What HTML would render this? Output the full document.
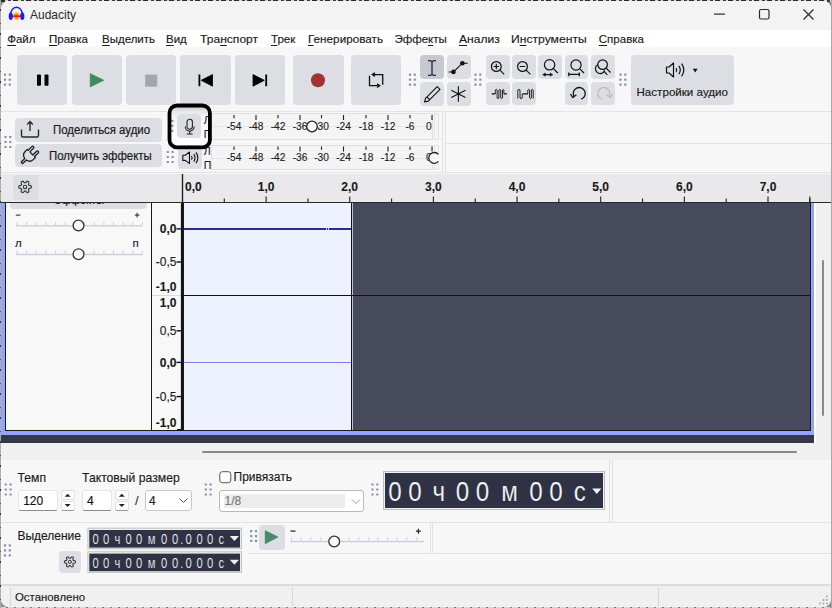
<!DOCTYPE html>
<html><head><meta charset="utf-8">
<style>
*{margin:0;padding:0;box-sizing:border-box}
html,body{width:832px;height:608px;overflow:hidden;background:#5a5a5a;font-family:"Liberation Sans",sans-serif;color:#1a1a1a}
.a{position:absolute}
.t{position:absolute;white-space:nowrap;line-height:1;-webkit-text-stroke:0.15px currentColor}
svg text{stroke:currentColor;stroke-width:0.12px}
.u{text-decoration:underline;text-underline-offset:2px;text-decoration-thickness:1px}
svg{position:absolute;left:0;top:0;overflow:visible}
</style></head><body>

<div class="a" style="left:0;top:0;width:832px;height:608px;background:#8a8a8a"></div>
<div class="a" style="left:0;top:0;width:832px;height:2px;background:repeating-linear-gradient(90deg,#2a2a2a 0 5px,#d8d8d8 5px 8px,#3a3a3a 8px 11px,#e0e0e0 11px 13px)"></div>
<div class="a" style="left:0;top:606.5px;width:832px;height:1.5px;background:repeating-linear-gradient(90deg,#dadada 0 6px,#777 6px 8px,#d4d4d4 8px 14px,#888 14px 16px)"></div>
<div class="a" style="left:0;top:0;width:1px;height:608px;background:repeating-linear-gradient(180deg,#a8a8a8 0 9px,#333 9px 11px,#b0b0b0 11px 23px,#555 23px 24px)"></div>
<div class="a" style="left:831px;top:0;width:1px;height:608px;background:#a8a8a8"></div>
<div id="win" class="a" style="left:1px;top:1px;width:830px;height:606px;background:#f7f7f7;border-radius:8px;overflow:hidden">
<div class="a" style="left:-1px;top:-1px;width:832px;height:608px">
<div class="a" style="left:0px;top:0px;width:832px;height:30px;background:#f3f3f3;"></div>
<svg width="832" height="30">
<defs><radialGradient id="g1" cx="50%" cy="50%" r="50%"><stop offset="0" stop-color="#ff2a00"/><stop offset="0.5" stop-color="#ff9a00"/><stop offset="1" stop-color="#ffe27a" stop-opacity="0.5"/></radialGradient></defs>
<ellipse cx="16.5" cy="16.1" rx="4.1" ry="4.6" fill="url(#g1)"/>
<rect x="12.6" y="15.4" width="7.8" height="1.6" fill="#ff1a00"/>
<path d="M10.4 15.5 A6.1 8.3 0 0 1 22.6 15.5" fill="none" stroke="#1a1aff" stroke-width="1.5"/>
<ellipse cx="10.8" cy="16.3" rx="2.1" ry="3.8" fill="#1a1aff"/>
<ellipse cx="22.3" cy="16.3" rx="2.1" ry="3.8" fill="#1a1aff"/>
<rect x="714" y="13.5" width="11" height="1.2" fill="#2a2a2a"/>
<rect x="759.5" y="9.5" width="9.5" height="9.5" rx="1.5" fill="none" stroke="#2a2a2a" stroke-width="1.2"/>
<path d="M803.5 9.5 L813.5 19.5 M813.5 9.5 L803.5 19.5" stroke="#2a2a2a" stroke-width="1.2"/>
</svg>
<div class="t" style="left:30px;top:9px;font-size:12px;color:#2a2a2a;font-weight:normal;-webkit-text-stroke:0">Audacity</div>
<div class="a" style="left:0px;top:30px;width:832px;height:17px;background:#ffffff;"></div>
<div class="t" style="left:7.2px;top:34px;font-size:11.5px;color:#1a1a1a;font-weight:normal;transform:scaleX(1.0);transform-origin:0 0"><span class="u">Ф</span>айл</div>
<div class="t" style="left:49px;top:34px;font-size:11.5px;color:#1a1a1a;font-weight:normal;transform:scaleX(1.0);transform-origin:0 0"><span class="u">П</span>равка</div>
<div class="t" style="left:102px;top:34px;font-size:11.5px;color:#1a1a1a;font-weight:normal;transform:scaleX(1.0);transform-origin:0 0"><span class="u">В</span>ыделить</div>
<div class="t" style="left:166px;top:34px;font-size:11.5px;color:#1a1a1a;font-weight:normal;transform:scaleX(1.0);transform-origin:0 0"><span class="u">В</span>ид</div>
<div class="t" style="left:200px;top:34px;font-size:11.5px;color:#1a1a1a;font-weight:normal;transform:scaleX(1.05);transform-origin:0 0">Тра<span class="u">н</span>спорт</div>
<div class="t" style="left:271px;top:34px;font-size:11.5px;color:#1a1a1a;font-weight:normal;transform:scaleX(1.0);transform-origin:0 0"><span class="u">Т</span>рек</div>
<div class="t" style="left:308px;top:34px;font-size:11.5px;color:#1a1a1a;font-weight:normal;transform:scaleX(1.02);transform-origin:0 0"><span class="u">Г</span>енерировать</div>
<div class="t" style="left:394.5px;top:34px;font-size:11.5px;color:#1a1a1a;font-weight:normal;transform:scaleX(1.0);transform-origin:0 0">Эффе<span class="u">к</span>ты</div>
<div class="t" style="left:459px;top:34px;font-size:11.5px;color:#1a1a1a;font-weight:normal;transform:scaleX(1.05);transform-origin:0 0"><span class="u">А</span>нализ</div>
<div class="t" style="left:511px;top:34px;font-size:11.5px;color:#1a1a1a;font-weight:normal;transform:scaleX(1.055);transform-origin:0 0">И<span class="u">н</span>струменты</div>
<div class="t" style="left:598.8px;top:34px;font-size:11.5px;color:#1a1a1a;font-weight:normal;transform:scaleX(1.0);transform-origin:0 0"><span class="u">С</span>правка</div>
<div class="a" style="left:0px;top:47px;width:832px;height:128px;background:#f7f7f8;"></div>
<div class="a" style="left:0px;top:111px;width:832px;height:1px;background:#e4e4e6;"></div>
<div class="a" style="left:0px;top:172px;width:832px;height:1px;background:#e4e4e6;"></div>
<div class="a" style="left:17px;top:55px;width:50px;height:50px;background:#dddee3;border-radius:4px"></div>
<div class="a" style="left:72px;top:55px;width:50px;height:50px;background:#dddee3;border-radius:4px"></div>
<div class="a" style="left:126px;top:55px;width:50px;height:50px;background:#dddee3;border-radius:4px"></div>
<div class="a" style="left:180px;top:55px;width:51px;height:50px;background:#dddee3;border-radius:4px"></div>
<div class="a" style="left:235px;top:55px;width:50px;height:50px;background:#dddee3;border-radius:4px"></div>
<div class="a" style="left:293px;top:55px;width:51px;height:50px;background:#dddee3;border-radius:4px"></div>
<div class="a" style="left:351px;top:55px;width:50px;height:50px;background:#dddee3;border-radius:4px"></div>
<svg width="832" height="175"><rect x="3.90" y="73.50" width="2.20" height="2.20" rx="0.50" fill="#8a8fa6"/><rect x="3.90" y="78.50" width="2.20" height="2.20" rx="0.50" fill="#8a8fa6"/><rect x="3.90" y="83.50" width="2.20" height="2.20" rx="0.50" fill="#8a8fa6"/><rect x="8.70" y="73.50" width="2.20" height="2.20" rx="0.50" fill="#8a8fa6"/><rect x="8.70" y="78.50" width="2.20" height="2.20" rx="0.50" fill="#8a8fa6"/><rect x="8.70" y="83.50" width="2.20" height="2.20" rx="0.50" fill="#8a8fa6"/>
<rect x="37" y="74.6" width="4" height="11.2" rx="1" fill="#000"/>
<rect x="44.5" y="74.6" width="4" height="11.2" rx="1" fill="#000"/>
<path d="M90.2 73.6 L103.9 80.3 L90.2 87 Z" fill="#3f8a5c" stroke="#3f8a5c" stroke-width="0.6" stroke-linejoin="round"/>
<rect x="145.2" y="74.6" width="12" height="12" fill="#a2a6b0"/>
<rect x="198.5" y="74.5" width="1.8" height="11.7" fill="#000"/>
<path d="M212.5 74.6 L201.2 80.3 L212.5 86.2 Z" fill="#000" stroke="#000" stroke-width="0.8" stroke-linejoin="round"/>
<path d="M253 74.6 L264.3 80.3 L253 86.2 Z" fill="#000" stroke="#000" stroke-width="0.8" stroke-linejoin="round"/>
<rect x="265.3" y="74.5" width="1.8" height="11.7" fill="#000"/>
<circle cx="318" cy="80.3" r="7" fill="#a33232"/>
<path d="M372.7 74.6 H382.7 V84.8 M369.5 75.8 V85.7 H379.3" fill="none" stroke="#111" stroke-width="1.3"/>
<path d="M375 72.8 L372.3 74.6 L375 76.4" fill="none" stroke="#111" stroke-width="1.3"/>
<path d="M377 83.9 L379.7 85.7 L377 87.5" fill="none" stroke="#111" stroke-width="1.3"/>
<rect x="408.90" y="73.50" width="2.20" height="2.20" rx="0.50" fill="#8a8fa6"/><rect x="408.90" y="78.50" width="2.20" height="2.20" rx="0.50" fill="#8a8fa6"/><rect x="408.90" y="83.50" width="2.20" height="2.20" rx="0.50" fill="#8a8fa6"/><rect x="413.70" y="73.50" width="2.20" height="2.20" rx="0.50" fill="#8a8fa6"/><rect x="413.70" y="78.50" width="2.20" height="2.20" rx="0.50" fill="#8a8fa6"/><rect x="413.70" y="83.50" width="2.20" height="2.20" rx="0.50" fill="#8a8fa6"/><rect x="474.40" y="73.50" width="2.20" height="2.20" rx="0.50" fill="#8a8fa6"/><rect x="474.40" y="78.50" width="2.20" height="2.20" rx="0.50" fill="#8a8fa6"/><rect x="474.40" y="83.50" width="2.20" height="2.20" rx="0.50" fill="#8a8fa6"/><rect x="479.20" y="73.50" width="2.20" height="2.20" rx="0.50" fill="#8a8fa6"/><rect x="479.20" y="78.50" width="2.20" height="2.20" rx="0.50" fill="#8a8fa6"/><rect x="479.20" y="83.50" width="2.20" height="2.20" rx="0.50" fill="#8a8fa6"/><rect x="619.40" y="73.50" width="2.20" height="2.20" rx="0.50" fill="#8a8fa6"/><rect x="619.40" y="78.50" width="2.20" height="2.20" rx="0.50" fill="#8a8fa6"/><rect x="619.40" y="83.50" width="2.20" height="2.20" rx="0.50" fill="#8a8fa6"/><rect x="624.20" y="73.50" width="2.20" height="2.20" rx="0.50" fill="#8a8fa6"/><rect x="624.20" y="78.50" width="2.20" height="2.20" rx="0.50" fill="#8a8fa6"/><rect x="624.20" y="83.50" width="2.20" height="2.20" rx="0.50" fill="#8a8fa6"/></svg>
<div class="a" style="left:420px;top:55px;width:24px;height:24px;background:#c6c8d4;border-radius:4px"></div>
<div class="a" style="left:446.5px;top:55px;width:24px;height:24px;background:#dddee3;border-radius:4px"></div>
<div class="a" style="left:420px;top:81.5px;width:24px;height:24px;background:#dddee3;border-radius:4px"></div>
<div class="a" style="left:446.5px;top:81.5px;width:24px;height:24px;background:#dddee3;border-radius:4px"></div>
<div class="a" style="left:486.2px;top:55.3px;width:23.6px;height:23.6px;background:#dddee3;border-radius:4px"></div>
<div class="a" style="left:512.3px;top:55.3px;width:23.6px;height:23.6px;background:#dddee3;border-radius:4px"></div>
<div class="a" style="left:538.3px;top:55.3px;width:23.6px;height:23.6px;background:#dddee3;border-radius:4px"></div>
<div class="a" style="left:564.6px;top:55.3px;width:23.6px;height:23.6px;background:#dddee3;border-radius:4px"></div>
<div class="a" style="left:591px;top:55.3px;width:23.6px;height:23.6px;background:#dddee3;border-radius:4px"></div>
<div class="a" style="left:486.2px;top:81.7px;width:23.6px;height:23.6px;background:#dddee3;border-radius:4px"></div>
<div class="a" style="left:512.3px;top:81.7px;width:23.6px;height:23.6px;background:#dddee3;border-radius:4px"></div>
<div class="a" style="left:564.6px;top:81.7px;width:23.6px;height:23.6px;background:#dddee3;border-radius:4px"></div>
<div class="a" style="left:591px;top:81.7px;width:23.6px;height:23.6px;background:#dddee3;border-radius:4px"></div>
<div class="a" style="left:630.5px;top:55.2px;width:103.5px;height:50.2px;background:#dddee3;border-radius:4px"></div>
<svg width="832" height="175">
<path d="M428 60.8 Q432 60 432 62.5 V73.5 Q432 76 428 75.2 M436 60.8 Q432 60 432 62.5 V73.5 Q432 76 436 75.2" fill="none" stroke="#333" stroke-width="1.4"/>
<path d="M448.6 72 H453.5 L462.4 63.2 H467.7" fill="none" stroke="#111" stroke-width="1.1"/>
<circle cx="453.5" cy="71.9" r="2.3" fill="#111"/><circle cx="462.4" cy="63.2" r="2.3" fill="#111"/>
<path d="M437.2 86.6 L440 89.4 L428.3 101.1 L424.6 102 L425.5 98.3 Z M427 97 L429.9 99.8" fill="none" stroke="#111" stroke-width="1.1" stroke-linejoin="round"/>
<path d="M458.4 86.3 V101.7 M451.3 90.3 L465.5 97.6 M451.3 97.6 L465.5 90.3" stroke="#111" stroke-width="1.1"/>
<circle cx="458.4" cy="93.9" r="1.3" fill="#111"/>
<circle cx="496.3" cy="66.5" r="4.9" fill="none" stroke="#111" stroke-width="1.2"/><path d="M500 70.2 L504.2 74.4 M493.6 66.5 H499 M496.3 63.8 V69.2" stroke="#111" stroke-width="1.2"/>
<circle cx="522.5" cy="66.5" r="4.9" fill="none" stroke="#111" stroke-width="1.2"/><path d="M526.2 70.2 L530.4 74.4 M519.8 66.5 H525.2" stroke="#111" stroke-width="1.2"/>
<circle cx="549.6" cy="64.8" r="5.2" fill="none" stroke="#111" stroke-width="1.2"/><path d="M553.4 68.6 L557.8 73" stroke="#111" stroke-width="1.2"/>
<path d="M542.8 74.6 H552.6" stroke="#111" stroke-width="1.1"/><path d="M545.5 72.4 L542.6 74.6 L545.5 76.8 Z M549.9 72.4 L552.8 74.6 L549.9 76.8 Z" fill="#111"/>
<circle cx="576" cy="65" r="5.1" fill="none" stroke="#111" stroke-width="1.2"/><path d="M579.8 68.8 L584 73" stroke="#111" stroke-width="1.2"/>
<path d="M568.8 74.3 H579.3 M568.8 72.4 V76.2 M579.3 72.4 V76.2" stroke="#111" stroke-width="1.3"/>
<circle cx="602.6" cy="64.6" r="4.8" fill="none" stroke="#111" stroke-width="1.2"/>
<path d="M597.8 64.6 A4.8 4.8 0 1 0 604.7 70.5" fill="none" stroke="#111" stroke-width="1.2"/>
<path d="M606.2 68.2 L610.5 72.5 M603.5 70.9 L607.4 74.8" stroke="#111" stroke-width="1.2"/>
<path d="M491.7 93.9 H495.3 M503.9 93.9 H506.9" stroke="#111" stroke-width="1.1"/>
<path d="M495.3 93.9 V90 Q496.2 88.6 497.1 90 V98 Q498 99.4 498.9 98 V90 Q499.8 88.6 500.7 90 V98 Q501.6 99.4 502.5 98 V90 Q503.2 88.8 503.9 90 V93.9" fill="none" stroke="#111" stroke-width="0.9"/>
<path d="M522.5 93.9 H528" stroke="#111" stroke-width="1.1"/>
<path d="M517.8 98.5 V90 Q518.9 88.6 520 90 V98 Q521.1 99.4 522.2 98 V93.9" fill="none" stroke="#111" stroke-width="0.9"/>
<path d="M527.8 93.9 V90 Q528.7 88.6 529.6 90 V98 Q530.5 99.4 531.4 98 V90 Q532.3 88.6 533.2 90 V98.5" fill="none" stroke="#111" stroke-width="0.9"/>
<path d="M574 96.5 A6 6 0 1 1 581.2 99.2" fill="none" stroke="#111" stroke-width="1.3"/>
<path d="M570.4 94 L572.8 97.6 L576.4 94.8" fill="none" stroke="#111" stroke-width="1.3" stroke-linejoin="miter"/>
<path d="M609 96.5 A6 6 0 1 0 601.8 99.2" fill="none" stroke="#b4b9c3" stroke-width="1.2"/>
<path d="M612.6 94 L610.2 97.6 L606.6 94.8" fill="none" stroke="#b4b9c3" stroke-width="1.2"/>
<path d="M666.5 67 H669 L673.5 63 V77 L669 73 H666.5 Z" fill="none" stroke="#111" stroke-width="1.2" stroke-linejoin="round"/>
<path d="M676 68 Q677.5 70 676 72 M678.8 65.8 Q681.8 70 678.8 74.2 M681.6 63.6 Q686 70 681.6 76.4" fill="none" stroke="#111" stroke-width="1.2"/>
<path d="M692.8 68.8 H697.6 L695.2 72.6 Z" fill="#111"/>
</svg>
<div class="t" style="left:636.5px;top:85.9px;font-size:11.6px;color:#1a1a1a;font-weight:normal;">Настройки аудио</div>
<div class="a" style="left:15px;top:117.5px;width:146.5px;height:24px;background:#dddee3;border-radius:4px"></div>
<div class="a" style="left:15px;top:143.8px;width:146.5px;height:23.5px;background:#dddee3;border-radius:4px"></div>
<svg width="832" height="175"><rect x="4.40" y="135.90" width="2.20" height="2.20" rx="0.50" fill="#8a8fa6"/><rect x="4.40" y="140.90" width="2.20" height="2.20" rx="0.50" fill="#8a8fa6"/><rect x="4.40" y="145.90" width="2.20" height="2.20" rx="0.50" fill="#8a8fa6"/><rect x="9.20" y="135.90" width="2.20" height="2.20" rx="0.50" fill="#8a8fa6"/><rect x="9.20" y="140.90" width="2.20" height="2.20" rx="0.50" fill="#8a8fa6"/><rect x="9.20" y="145.90" width="2.20" height="2.20" rx="0.50" fill="#8a8fa6"/>
<path d="M21.5 129.5 V135.5 Q21.5 137 23 137 H37 Q38.5 137 38.5 135.5 V129.5" fill="none" stroke="#2a2a2a" stroke-width="1.4"/>
<path d="M30 131 V122 M27.2 124.6 L30 121.6 L32.8 124.6" fill="none" stroke="#2a2a2a" stroke-width="1.4"/>
<path transform="translate(29.2,155.6) rotate(45) scale(0.86)" d="M-1.3 11 L-1.3 6 C-4.5 5.5 -6.6 3 -6.6 0 L-6.6 -3.6 L-5.2 -3.6 L-5.2 -9.6 A1.35 1.35 0 0 1 -2.5 -9.6 L-2.5 -3.6 L2.5 -3.6 L2.5 -9.6 A1.35 1.35 0 0 1 5.2 -9.6 L5.2 -3.6 L6.6 -3.6 L6.6 0 C6.6 3 4.5 5.5 1.3 6 L1.3 11 A1.3 1.3 0 0 1 -1.3 11 Z" fill="none" stroke="#222" stroke-width="1.55" stroke-linejoin="round"/>
</svg>
<div class="t" style="left:52.5px;top:123.6px;font-size:12px;color:#1a1a1a;font-weight:normal;transform:scaleX(0.95);transform-origin:0 0;-webkit-text-stroke:0.2px #1a1a1a">Поделиться аудио</div>
<div class="t" style="left:49px;top:149.8px;font-size:12px;color:#1a1a1a;font-weight:normal;transform:scaleX(0.95);transform-origin:0 0;-webkit-text-stroke:0.2px #1a1a1a">Получить эффекты</div>
<div class="a" style="left:171px;top:107px;width:37.5px;height:39px;border-radius:5px;background:linear-gradient(180deg,#c9c9c9 0px,#e6e6e6 4px,#f3f3f3 9px,#fbfbfb 60%,#ffffff 100%)"></div>
<div class="a" style="left:176.8px;top:114px;width:24.6px;height:24.1px;background:#dddee3;border-radius:4px"></div>
<div class="a" style="left:177.5px;top:144.5px;width:24px;height:24.5px;background:#dddee3;border-radius:4px"></div>
<div class="a" style="left:211px;top:113px;width:222px;height:26.5px;background:#f4f4f5;border:1px solid #dedee2"></div>
<div class="a" style="left:211px;top:144.8px;width:222px;height:25.6px;background:#f4f4f5;border:1px solid #dedee2"></div>
<div class="a" style="left:212px;top:126px;width:220px;height:1px;background:#e6e6e8;"></div>
<div class="a" style="left:212px;top:157.5px;width:220px;height:1px;background:#e6e6e8;"></div>
<div class="a" style="left:433.5px;top:113px;width:5px;height:26.5px;background:#f4f4f5;border:1px solid #e2e2e5"></div>
<div class="a" style="left:433.5px;top:144.8px;width:5px;height:25.6px;background:#f4f4f5;border:1px solid #e2e2e5"></div>
<div class="a" style="left:442px;top:112px;width:1px;height:60px;background:#e2e2e5;"></div>
<div class="a" style="left:445px;top:112px;width:1px;height:60px;background:#e2e2e5;"></div>
<div class="a" style="left:446px;top:142.6px;width:386px;height:1.2px;background:#e4e4e7;"></div>
<svg width="832" height="175"><rect x="233.45" y="115" width="1.1" height="3.3" fill="#222"/><rect x="233.45" y="146.5" width="1.1" height="3.3" fill="#222"/><text x="234.0" y="129.5" font-size="10.2" text-anchor="middle" fill="#1a1a1a">-54</text><text x="234.0" y="160.6" font-size="10.2" text-anchor="middle" fill="#1a1a1a">-54</text><rect x="255.45" y="115" width="1.1" height="5" fill="#222"/><rect x="255.45" y="146.5" width="1.1" height="5" fill="#222"/><text x="256.0" y="129.5" font-size="10.2" text-anchor="middle" fill="#1a1a1a">-48</text><text x="256.0" y="160.6" font-size="10.2" text-anchor="middle" fill="#1a1a1a">-48</text><rect x="277.45" y="115" width="1.1" height="3.3" fill="#222"/><rect x="277.45" y="146.5" width="1.1" height="3.3" fill="#222"/><text x="278.0" y="129.5" font-size="10.2" text-anchor="middle" fill="#1a1a1a">-42</text><text x="278.0" y="160.6" font-size="10.2" text-anchor="middle" fill="#1a1a1a">-42</text><rect x="299.45" y="115" width="1.1" height="5" fill="#222"/><rect x="299.45" y="146.5" width="1.1" height="5" fill="#222"/><text x="300.0" y="129.5" font-size="10.2" text-anchor="middle" fill="#1a1a1a">-36</text><text x="300.0" y="160.6" font-size="10.2" text-anchor="middle" fill="#1a1a1a">-36</text><rect x="320.95" y="115" width="1.1" height="3.3" fill="#222"/><rect x="320.95" y="146.5" width="1.1" height="3.3" fill="#222"/><text x="321.5" y="129.5" font-size="10.2" text-anchor="middle" fill="#1a1a1a">-30</text><text x="321.5" y="160.6" font-size="10.2" text-anchor="middle" fill="#1a1a1a">-30</text><rect x="342.95" y="115" width="1.1" height="5" fill="#222"/><rect x="342.95" y="146.5" width="1.1" height="5" fill="#222"/><text x="343.5" y="129.5" font-size="10.2" text-anchor="middle" fill="#1a1a1a">-24</text><text x="343.5" y="160.6" font-size="10.2" text-anchor="middle" fill="#1a1a1a">-24</text><rect x="365.45" y="115" width="1.1" height="3.3" fill="#222"/><rect x="365.45" y="146.5" width="1.1" height="3.3" fill="#222"/><text x="366.0" y="129.5" font-size="10.2" text-anchor="middle" fill="#1a1a1a">-18</text><text x="366.0" y="160.6" font-size="10.2" text-anchor="middle" fill="#1a1a1a">-18</text><rect x="387.45" y="115" width="1.1" height="5" fill="#222"/><rect x="387.45" y="146.5" width="1.1" height="5" fill="#222"/><text x="388.0" y="129.5" font-size="10.2" text-anchor="middle" fill="#1a1a1a">-12</text><text x="388.0" y="160.6" font-size="10.2" text-anchor="middle" fill="#1a1a1a">-12</text><rect x="409.45" y="115" width="1.1" height="3.3" fill="#222"/><rect x="409.45" y="146.5" width="1.1" height="3.3" fill="#222"/><text x="410.0" y="129.5" font-size="10.2" text-anchor="middle" fill="#1a1a1a">-6</text><text x="410.0" y="160.6" font-size="10.2" text-anchor="middle" fill="#1a1a1a">-6</text><rect x="431.45" y="115" width="1.1" height="5" fill="#222"/><rect x="431.45" y="146.5" width="1.1" height="5" fill="#222"/><text x="428.8" y="129.5" font-size="10.2" text-anchor="middle" fill="#1a1a1a">0</text><text x="428.8" y="160.6" font-size="10.2" text-anchor="middle" fill="#1a1a1a">0</text><circle cx="312" cy="126.5" r="5.3" fill="#fafafa" stroke="#222" stroke-width="1.3"/><circle cx="434.2" cy="157.9" r="5.3" fill="#f8f8f8"/><path d="M438.34 154.43 A5.4 5.4 0 1 0 438.34 161.37" fill="none" stroke="#222" stroke-width="1.3"/><rect x="166.70" y="150.90" width="2.20" height="2.20" rx="0.50" fill="#8a8fa6"/><rect x="166.70" y="155.90" width="2.20" height="2.20" rx="0.50" fill="#8a8fa6"/><rect x="166.70" y="160.90" width="2.20" height="2.20" rx="0.50" fill="#8a8fa6"/><rect x="171.50" y="150.90" width="2.20" height="2.20" rx="0.50" fill="#8a8fa6"/><rect x="171.50" y="155.90" width="2.20" height="2.20" rx="0.50" fill="#8a8fa6"/><rect x="171.50" y="160.90" width="2.20" height="2.20" rx="0.50" fill="#8a8fa6"/><rect x="171.20" y="119.70" width="2.20" height="2.20" rx="0.50" fill="#8a8fa6"/><rect x="171.20" y="124.70" width="2.20" height="2.20" rx="0.50" fill="#8a8fa6"/><rect x="171.20" y="129.70" width="2.20" height="2.20" rx="0.50" fill="#8a8fa6"/><path d="M187 124 V122 A2.7 2.7 0 0 1 192.4 122 V126.5 A2.7 2.7 0 0 1 187 126.5 Z" fill="none" stroke="#222" stroke-width="1.1"/>
<path d="M185.2 126.6 A4.5 4.5 0 0 0 194.2 126.6 M189.7 131.3 V133.8 M186.8 134 H192.6" fill="none" stroke="#222" stroke-width="1.1"/>
<path d="M182.8 155.2 H185.2 L189.5 152 V163.6 L185.2 160.4 H182.8 Z" fill="none" stroke="#111" stroke-width="1.1" stroke-linejoin="round"/>
<path d="M191.5 156 Q192.8 157.8 191.5 159.6 M193.8 154 Q196.2 157.8 193.8 161.6 M196 152.4 Q199.6 157.8 196 163.2" fill="none" stroke="#111" stroke-width="1.1"/>
<text x="203.8" y="124" font-size="10.5" fill="#222">Л</text><text x="203.8" y="137.8" font-size="10.5" fill="#222">П</text><text x="203.8" y="154.5" font-size="10.5" fill="#222">Л</text><text x="203.8" y="168.5" font-size="10.5" fill="#222">П</text><rect x="169.5" y="105.5" width="40.4" height="41.9" rx="7.5" fill="none" stroke="#000" stroke-width="3.8"/></svg>
<div class="a" style="left:0px;top:174px;width:832px;height:28px;background:#e9e9ec;"></div>
<div class="a" style="left:12.8px;top:174.6px;width:26px;height:25.6px;background:#dddee3;border-radius:4px"></div>
<svg width="832" height="608"><path d="M31.25 186.90 L31.24 187.17 L31.23 187.44 L31.20 187.71 L31.06 187.96 L30.58 188.13 L30.07 188.25 L29.57 188.32 L29.09 188.37 L28.93 188.51 L28.86 188.67 L28.78 188.84 L28.69 189.00 L28.59 189.16 L28.49 189.31 L28.38 189.46 L28.34 189.66 L28.54 190.10 L28.73 190.58 L28.88 191.08 L28.97 191.57 L28.82 191.82 L28.61 191.98 L28.38 192.13 L28.15 192.27 L27.91 192.40 L27.67 192.52 L27.42 192.63 L27.14 192.63 L26.75 192.30 L26.40 191.92 L26.07 191.52 L25.80 191.13 L25.60 191.06 L25.42 191.08 L25.23 191.10 L25.05 191.10 L24.87 191.10 L24.68 191.08 L24.50 191.06 L24.30 191.13 L24.03 191.52 L23.70 191.92 L23.35 192.30 L22.96 192.63 L22.68 192.63 L22.43 192.52 L22.19 192.40 L21.95 192.27 L21.72 192.13 L21.49 191.98 L21.28 191.82 L21.13 191.57 L21.22 191.08 L21.37 190.58 L21.56 190.10 L21.76 189.66 L21.72 189.46 L21.61 189.31 L21.51 189.16 L21.41 189.00 L21.32 188.84 L21.24 188.67 L21.17 188.51 L21.01 188.37 L20.53 188.32 L20.03 188.25 L19.52 188.13 L19.04 187.96 L18.90 187.71 L18.87 187.44 L18.86 187.17 L18.85 186.90 L18.86 186.63 L18.87 186.36 L18.90 186.09 L19.04 185.84 L19.52 185.67 L20.03 185.55 L20.53 185.48 L21.01 185.43 L21.17 185.29 L21.24 185.13 L21.32 184.96 L21.41 184.80 L21.51 184.64 L21.61 184.49 L21.72 184.34 L21.76 184.14 L21.56 183.70 L21.37 183.22 L21.22 182.72 L21.13 182.23 L21.28 181.98 L21.49 181.82 L21.72 181.67 L21.95 181.53 L22.19 181.40 L22.43 181.28 L22.68 181.17 L22.96 181.17 L23.35 181.50 L23.70 181.88 L24.03 182.28 L24.30 182.67 L24.50 182.74 L24.68 182.72 L24.87 182.70 L25.05 182.70 L25.23 182.70 L25.42 182.72 L25.60 182.74 L25.80 182.67 L26.07 182.28 L26.40 181.88 L26.75 181.50 L27.14 181.17 L27.42 181.17 L27.67 181.28 L27.91 181.40 L28.15 181.53 L28.38 181.67 L28.61 181.82 L28.82 181.98 L28.97 182.23 L28.88 182.72 L28.73 183.22 L28.54 183.70 L28.34 184.14 L28.38 184.34 L28.49 184.49 L28.59 184.64 L28.69 184.80 L28.78 184.96 L28.86 185.13 L28.93 185.29 L29.09 185.43 L29.57 185.48 L30.07 185.55 L30.58 185.67 L31.06 185.84 L31.20 186.09 L31.23 186.36 L31.24 186.63 Z" fill="none" stroke="#333" stroke-width="1.15" stroke-linejoin="round"/><circle cx="25.05" cy="186.9" r="1.7" fill="none" stroke="#333" stroke-width="1.1"/><rect x="181.8" y="174" width="1.4" height="28" fill="#222"/><text x="185" y="190.5" font-size="12" font-weight="bold" fill="#1a1a1a">0,0</text><rect x="223.73" y="198.5" width="1.1" height="3.5" fill="#222"/><rect x="265.55" y="196.5" width="1.1" height="5.5" fill="#222"/><text x="266.1" y="190.5" font-size="12" font-weight="bold" text-anchor="middle" fill="#1a1a1a">1,0</text><rect x="307.38" y="198.5" width="1.1" height="3.5" fill="#222"/><rect x="349.20" y="196.5" width="1.1" height="5.5" fill="#222"/><text x="349.7" y="190.5" font-size="12" font-weight="bold" text-anchor="middle" fill="#1a1a1a">2,0</text><rect x="391.03" y="198.5" width="1.1" height="3.5" fill="#222"/><rect x="432.85" y="196.5" width="1.1" height="5.5" fill="#222"/><text x="433.4" y="190.5" font-size="12" font-weight="bold" text-anchor="middle" fill="#1a1a1a">3,0</text><rect x="474.68" y="198.5" width="1.1" height="3.5" fill="#222"/><rect x="516.50" y="196.5" width="1.1" height="5.5" fill="#222"/><text x="517.0" y="190.5" font-size="12" font-weight="bold" text-anchor="middle" fill="#1a1a1a">4,0</text><rect x="558.33" y="198.5" width="1.1" height="3.5" fill="#222"/><rect x="600.15" y="196.5" width="1.1" height="5.5" fill="#222"/><text x="600.6" y="190.5" font-size="12" font-weight="bold" text-anchor="middle" fill="#1a1a1a">5,0</text><rect x="641.98" y="198.5" width="1.1" height="3.5" fill="#222"/><rect x="683.80" y="196.5" width="1.1" height="5.5" fill="#222"/><text x="684.3" y="190.5" font-size="12" font-weight="bold" text-anchor="middle" fill="#1a1a1a">6,0</text><rect x="725.63" y="198.5" width="1.1" height="3.5" fill="#222"/><rect x="767.45" y="196.5" width="1.1" height="5.5" fill="#222"/><text x="768.0" y="190.5" font-size="12" font-weight="bold" text-anchor="middle" fill="#1a1a1a">7,0</text><rect x="809.28" y="198.5" width="1.1" height="3.5" fill="#222"/><rect x="809.3" y="196.5" width="1.1" height="5.5" fill="#222"/></svg>
<div class="a" style="left:0px;top:202px;width:832px;height:1px;background:#2a2a2a;"></div>
<div class="a" style="left:1px;top:203px;width:813px;height:240px;background:#f0f0f0;"></div>
<div class="a" style="left:1.2px;top:202.5px;width:812.6px;height:232.3px;background:#93a4fb;"></div>
<div class="a" style="left:5px;top:203px;width:805.5px;height:228.3px;background:#1a1a1a;"></div>
<div class="a" style="left:6px;top:203px;width:145px;height:226.9px;background:#f8f8f8;"></div>
<div class="a" style="left:6px;top:203px;width:145.5px;height:8px;overflow:hidden"><div class="a" style="left:4px;top:-13px;width:137px;height:18.6px;background:#dddee3;border-radius:4px"></div><div class="t" style="left:48px;top:-8.3px;font-size:11.5px;color:#111;transform:scaleX(0.96);transform-origin:0 0">Эффекты</div></div>
<div class="a" style="left:152px;top:203px;width:29px;height:226.9px;background:#f8f8f8;"></div>
<div class="a" style="left:183.5px;top:203px;width:167.3px;height:91.5px;background:#eef1fe;"></div>
<div class="a" style="left:183.5px;top:295.5px;width:167.3px;height:134.3px;background:#eef1fe;"></div>
<div class="a" style="left:353px;top:203px;width:457px;height:91.5px;background:#474a5c;"></div>
<div class="a" style="left:353px;top:295.5px;width:457px;height:134.3px;background:#474a5c;"></div>
<div class="a" style="left:350.8px;top:203px;width:1.2px;height:226.8px;background:#111;"></div>
<div class="a" style="left:352px;top:203px;width:1px;height:226.8px;background:#bfc2d2;"></div>
<div class="a" style="left:152px;top:294.7px;width:29px;height:1px;background:#dcdcdc;"></div>
<div class="a" style="left:176.5px;top:429.3px;width:4.5px;height:1.4px;background:#111;"></div>
<div class="a" style="left:182px;top:294.7px;width:628px;height:1px;background:#111;"></div>
<div class="a" style="left:183.5px;top:228.4px;width:167.3px;height:1.6px;background:#2c2c8c;"></div>
<div class="a" style="left:325.5px;top:228.4px;width:1.2px;height:1.6px;background:#c8c8f0;"></div>
<div class="a" style="left:327.8px;top:228.4px;width:1.2px;height:1.6px;background:#c8c8f0;"></div>
<div class="a" style="left:183.5px;top:362px;width:167.3px;height:1.2px;background:#7b7be0;"></div>
<div class="a" style="left:1.2px;top:434.8px;width:813.1px;height:7.8px;background:#353849;"></div>
<div class="a" style="left:814.2px;top:202.5px;width:1.5px;height:240px;background:#ffffff;"></div>
<div class="a" style="left:815.7px;top:202.5px;width:16px;height:257px;background:#f0f0f0;"></div>
<div class="a" style="left:0px;top:442.6px;width:832px;height:17px;background:#f0f0f0;"></div>
<div class="a" style="left:822.1px;top:260px;width:2.1px;height:155.5px;background:#8a8a8a;border-radius:1px"></div>
<div class="a" style="left:202px;top:451px;width:595px;height:2.2px;background:#8a8a8a;border-radius:1px"></div>
<svg width="832" height="608"><rect x="15.8" y="225.1" width="126.5" height="1.4" fill="#c5d0dc"/><rect x="16.5" y="222.2" width="1" height="3" fill="#c5d0dc"/><rect x="26.1" y="222.2" width="1" height="3" fill="#c5d0dc"/><rect x="35.8" y="222.2" width="1" height="3" fill="#c5d0dc"/><rect x="45.5" y="222.2" width="1" height="3" fill="#c5d0dc"/><rect x="55.1" y="222.2" width="1" height="3" fill="#c5d0dc"/><rect x="64.8" y="222.2" width="1" height="3" fill="#c5d0dc"/><rect x="74.4" y="222.2" width="1" height="3" fill="#c5d0dc"/><rect x="84.0" y="222.2" width="1" height="3" fill="#c5d0dc"/><rect x="93.7" y="222.2" width="1" height="3" fill="#c5d0dc"/><rect x="103.4" y="222.2" width="1" height="3" fill="#c5d0dc"/><rect x="113.0" y="222.2" width="1" height="3" fill="#c5d0dc"/><rect x="122.7" y="222.2" width="1" height="3" fill="#c5d0dc"/><rect x="132.3" y="222.2" width="1" height="3" fill="#c5d0dc"/><rect x="141.9" y="222.2" width="1" height="3" fill="#c5d0dc"/><circle cx="78.5" cy="225.5" r="5.4" fill="#fafafa" stroke="#333" stroke-width="1.3"/><rect x="15.8" y="253.8" width="126.5" height="1.4" fill="#c5d0dc"/><rect x="16.5" y="250.9" width="1" height="3" fill="#c5d0dc"/><rect x="26.1" y="250.9" width="1" height="3" fill="#c5d0dc"/><rect x="35.8" y="250.9" width="1" height="3" fill="#c5d0dc"/><rect x="45.5" y="250.9" width="1" height="3" fill="#c5d0dc"/><rect x="55.1" y="250.9" width="1" height="3" fill="#c5d0dc"/><rect x="64.8" y="250.9" width="1" height="3" fill="#c5d0dc"/><rect x="74.4" y="250.9" width="1" height="3" fill="#c5d0dc"/><rect x="84.0" y="250.9" width="1" height="3" fill="#c5d0dc"/><rect x="93.7" y="250.9" width="1" height="3" fill="#c5d0dc"/><rect x="103.4" y="250.9" width="1" height="3" fill="#c5d0dc"/><rect x="113.0" y="250.9" width="1" height="3" fill="#c5d0dc"/><rect x="122.7" y="250.9" width="1" height="3" fill="#c5d0dc"/><rect x="132.3" y="250.9" width="1" height="3" fill="#c5d0dc"/><rect x="141.9" y="250.9" width="1" height="3" fill="#c5d0dc"/><circle cx="78.5" cy="254.2" r="5.4" fill="#fafafa" stroke="#333" stroke-width="1.3"/><rect x="15.8" y="214.6" width="4.6" height="1" fill="#222"/><path d="M134.8 215.1 H139.4 M137.1 212.8 V217.4" stroke="#222" stroke-width="1"/><text x="15" y="247" font-size="11.5" fill="#222">л</text><text x="132.5" y="247" font-size="11.5" fill="#222">п</text><rect x="180.9" y="203" width="1.7" height="227.5" fill="#111"/><text x="176.5" y="233.2" font-size="12" font-weight="bold" text-anchor="end" fill="#1a1a1a">0,0</text><rect x="176.5" y="228.2" width="4.5" height="1.4" fill="#111"/><text x="176.5" y="266.3" font-size="12" font-weight="normal" text-anchor="end" fill="#1a1a1a">-0,5</text><rect x="176.5" y="261.3" width="4.5" height="1.4" fill="#111"/><text x="176.5" y="291.0" font-size="12" font-weight="bold" text-anchor="end" fill="#1a1a1a">-1,0</text><text x="176.5" y="307.3" font-size="12" font-weight="bold" text-anchor="end" fill="#1a1a1a">1,0</text><text x="176.5" y="335.1" font-size="12" font-weight="normal" text-anchor="end" fill="#1a1a1a">0,5</text><rect x="176.5" y="330.1" width="4.5" height="1.4" fill="#111"/><text x="176.5" y="366.7" font-size="12" font-weight="bold" text-anchor="end" fill="#1a1a1a">0,0</text><rect x="176.5" y="361.7" width="4.5" height="1.4" fill="#111"/><text x="176.5" y="400.9" font-size="12" font-weight="normal" text-anchor="end" fill="#1a1a1a">-0,5</text><rect x="176.5" y="395.9" width="4.5" height="1.4" fill="#111"/><text x="176.5" y="427.2" font-size="12" font-weight="bold" text-anchor="end" fill="#1a1a1a">-1,0</text></svg>
<div class="a" style="left:0px;top:459.5px;width:832px;height:125px;background:#f7f7f8;"></div>
<div class="a" style="left:0px;top:521.5px;width:832px;height:1px;background:#e2e2e5;"></div>
<div class="a" style="left:609.2px;top:460.4px;width:1px;height:61.2px;background:#e0e0e3;"></div>
<div class="a" style="left:612px;top:460.4px;width:1px;height:61.2px;background:#e0e0e3;"></div>
<div class="t" style="left:17.5px;top:471.6px;font-size:12.2px;color:#1a1a1a;font-weight:normal;">Темп</div>
<div class="t" style="left:82px;top:471.6px;font-size:12.2px;color:#1a1a1a;font-weight:normal;">Тактовый размер</div>
<div class="a" style="left:18.2px;top:490.3px;width:39.8px;height:20.8px;background:#fff;border:1px solid #e5e5e5;border-bottom:1px solid #8a8a8a;border-radius:3px"></div>
<div class="t" style="left:23.2px;top:495.3px;font-size:12px;color:#111;font-weight:normal;">120</div>
<div class="a" style="left:82px;top:490.3px;width:30.3px;height:20.8px;background:#fff;border:1px solid #e5e5e5;border-bottom:1px solid #8a8a8a;border-radius:3px"></div>
<div class="t" style="left:87px;top:495.3px;font-size:12px;color:#111;font-weight:normal;">4</div>
<div class="a" style="left:144.6px;top:490.3px;width:47.7px;height:21px;background:#fff;border:1px solid #c8c8c8;border-radius:3px"></div>
<div class="t" style="left:149px;top:495.3px;font-size:12px;color:#1a1a1a;font-weight:normal;">4</div>
<div class="t" style="left:135px;top:494px;font-size:13px;color:#333;font-weight:normal;">/</div>
<div class="a" style="left:60.6px;top:490.3px;width:14px;height:10.2px;background:#fff;border:1px solid #e0e0e0;border-radius:2px"></div>
<div class="a" style="left:60.6px;top:500.8px;width:14px;height:10.2px;background:#fff;border:1px solid #e0e0e0;border-bottom:1px solid #9a9a9a;border-radius:2px"></div>
<div class="a" style="left:114.8px;top:490.3px;width:14px;height:10.2px;background:#fff;border:1px solid #e0e0e0;border-radius:2px"></div>
<div class="a" style="left:114.8px;top:500.8px;width:14px;height:10.2px;background:#fff;border:1px solid #e0e0e0;border-bottom:1px solid #9a9a9a;border-radius:2px"></div>
<svg width="832" height="608"><path d="M64.6 496.8 L67.6 493.8 L70.6 496.8 Z" fill="#222"/><path d="M64.6 504 L67.6 507 L70.6 504 Z" fill="#222"/><path d="M118.8 496.8 L121.8 493.8 L124.8 496.8 Z" fill="#222"/><path d="M118.8 504 L121.8 507 L124.8 504 Z" fill="#222"/><path d="M179.5 498.5 L183.5 502.5 L187.5 498.5" fill="none" stroke="#555" stroke-width="1"/><rect x="4.70" y="483.40" width="2.20" height="2.20" rx="0.50" fill="#8a8fa6"/><rect x="4.70" y="488.40" width="2.20" height="2.20" rx="0.50" fill="#8a8fa6"/><rect x="4.70" y="493.40" width="2.20" height="2.20" rx="0.50" fill="#8a8fa6"/><rect x="9.50" y="483.40" width="2.20" height="2.20" rx="0.50" fill="#8a8fa6"/><rect x="9.50" y="488.40" width="2.20" height="2.20" rx="0.50" fill="#8a8fa6"/><rect x="9.50" y="493.40" width="2.20" height="2.20" rx="0.50" fill="#8a8fa6"/><rect x="204.70" y="483.40" width="2.20" height="2.20" rx="0.50" fill="#8a8fa6"/><rect x="204.70" y="488.40" width="2.20" height="2.20" rx="0.50" fill="#8a8fa6"/><rect x="204.70" y="493.40" width="2.20" height="2.20" rx="0.50" fill="#8a8fa6"/><rect x="209.50" y="483.40" width="2.20" height="2.20" rx="0.50" fill="#8a8fa6"/><rect x="209.50" y="488.40" width="2.20" height="2.20" rx="0.50" fill="#8a8fa6"/><rect x="209.50" y="493.40" width="2.20" height="2.20" rx="0.50" fill="#8a8fa6"/><rect x="371.40" y="483.40" width="2.20" height="2.20" rx="0.50" fill="#8a8fa6"/><rect x="371.40" y="488.40" width="2.20" height="2.20" rx="0.50" fill="#8a8fa6"/><rect x="371.40" y="493.40" width="2.20" height="2.20" rx="0.50" fill="#8a8fa6"/><rect x="376.20" y="483.40" width="2.20" height="2.20" rx="0.50" fill="#8a8fa6"/><rect x="376.20" y="488.40" width="2.20" height="2.20" rx="0.50" fill="#8a8fa6"/><rect x="376.20" y="493.40" width="2.20" height="2.20" rx="0.50" fill="#8a8fa6"/><rect x="219.8" y="471.7" width="11" height="11" rx="2.5" fill="#fff" stroke="#555" stroke-width="1"/></svg>
<div class="t" style="left:233.5px;top:471.2px;font-size:12px;color:#1a1a1a;font-weight:normal;">Привязать</div>
<div class="a" style="left:219.3px;top:489.6px;width:145.2px;height:22.2px;background:#fff;border:1px solid #b8b8b8;border-radius:3px"></div>
<div class="a" style="left:224.2px;top:493.7px;width:120.8px;height:14px;background:#ececec;"></div>
<div class="t" style="left:224.5px;top:495.3px;font-size:12px;color:#777;font-weight:normal;">1/8</div>
<svg width="832" height="608"><path d="M352 499.5 L356 503.5 L360 499.5" fill="none" stroke="#999" stroke-width="1"/></svg>
<div class="a" style="left:383.2px;top:470.9px;width:221.5px;height:38.9px;background:#f0f0f0;border:1px solid #bdbdbd"></div>
<div class="a" style="left:385px;top:472.8px;width:218px;height:34.9px;background:#2f3245;"></div>
<svg width="832" height="608"><text transform="translate(395,501.3) scale(0.88,1)" font-size="27.5" text-anchor="middle" fill="#f2f2f2">0</text><text transform="translate(415,501.3) scale(0.88,1)" font-size="27.5" text-anchor="middle" fill="#f2f2f2">0</text><text transform="translate(438.8,501.3) scale(0.88,1)" font-size="27.5" text-anchor="middle" fill="#f2f2f2">ч</text><text transform="translate(462.6,501.3) scale(0.88,1)" font-size="27.5" text-anchor="middle" fill="#f2f2f2">0</text><text transform="translate(482.5,501.3) scale(0.88,1)" font-size="27.5" text-anchor="middle" fill="#f2f2f2">0</text><text transform="translate(509.5,501.3) scale(0.88,1)" font-size="27.5" text-anchor="middle" fill="#f2f2f2">м</text><text transform="translate(535.9,501.3) scale(0.88,1)" font-size="27.5" text-anchor="middle" fill="#f2f2f2">0</text><text transform="translate(556,501.3) scale(0.88,1)" font-size="27.5" text-anchor="middle" fill="#f2f2f2">0</text><text transform="translate(579.9,501.3) scale(0.88,1)" font-size="27.5" text-anchor="middle" fill="#f2f2f2">с</text><path d="M592.2 488.6 H601.4 L596.8 494 Z" fill="#f2f2f2"/></svg>
<div class="t" style="left:17.4px;top:529.5px;font-size:12px;color:#1a1a1a;font-weight:normal;">Выделение</div>
<svg width="832" height="608"><rect x="87.9" y="528.2" width="153.5" height="20.5" fill="#f0f0f0" stroke="#c0c0c0" stroke-width="1"/><rect x="89.3" y="530.0" width="150.7" height="17.6" fill="#2f3245"/><text transform="translate(95.5,544.3) scale(0.8,1)" font-size="14" text-anchor="middle" fill="#f0f0f0">0</text><text transform="translate(106.1,544.3) scale(0.8,1)" font-size="14" text-anchor="middle" fill="#f0f0f0">0</text><text transform="translate(117.3,544.3) scale(0.8,1)" font-size="14" text-anchor="middle" fill="#f0f0f0">ч</text><text transform="translate(128.7,544.3) scale(0.8,1)" font-size="14" text-anchor="middle" fill="#f0f0f0">0</text><text transform="translate(139,544.3) scale(0.8,1)" font-size="14" text-anchor="middle" fill="#f0f0f0">0</text><text transform="translate(151.5,544.3) scale(0.8,1)" font-size="14" text-anchor="middle" fill="#f0f0f0">м</text><text transform="translate(164,544.3) scale(0.8,1)" font-size="14" text-anchor="middle" fill="#f0f0f0">0</text><text transform="translate(175.1,544.3) scale(0.8,1)" font-size="14" text-anchor="middle" fill="#f0f0f0">0</text><text transform="translate(181.8,544.3) scale(0.8,1)" font-size="14" text-anchor="middle" fill="#f0f0f0">.</text><text transform="translate(188.6,544.3) scale(0.8,1)" font-size="14" text-anchor="middle" fill="#f0f0f0">0</text><text transform="translate(199.5,544.3) scale(0.8,1)" font-size="14" text-anchor="middle" fill="#f0f0f0">0</text><text transform="translate(210.2,544.3) scale(0.8,1)" font-size="14" text-anchor="middle" fill="#f0f0f0">0</text><text transform="translate(221.4,544.3) scale(0.8,1)" font-size="14" text-anchor="middle" fill="#f0f0f0">с</text><path d="M229.8 536.1 H239 L234.4 541.1 Z" fill="#f0f0f0"/><rect x="87.9" y="551.8" width="153.5" height="20.5" fill="#f0f0f0" stroke="#c0c0c0" stroke-width="1"/><rect x="89.3" y="553.6" width="150.7" height="17.6" fill="#2f3245"/><text transform="translate(95.5,567.9) scale(0.8,1)" font-size="14" text-anchor="middle" fill="#f0f0f0">0</text><text transform="translate(106.1,567.9) scale(0.8,1)" font-size="14" text-anchor="middle" fill="#f0f0f0">0</text><text transform="translate(117.3,567.9) scale(0.8,1)" font-size="14" text-anchor="middle" fill="#f0f0f0">ч</text><text transform="translate(128.7,567.9) scale(0.8,1)" font-size="14" text-anchor="middle" fill="#f0f0f0">0</text><text transform="translate(139,567.9) scale(0.8,1)" font-size="14" text-anchor="middle" fill="#f0f0f0">0</text><text transform="translate(151.5,567.9) scale(0.8,1)" font-size="14" text-anchor="middle" fill="#f0f0f0">м</text><text transform="translate(164,567.9) scale(0.8,1)" font-size="14" text-anchor="middle" fill="#f0f0f0">0</text><text transform="translate(175.1,567.9) scale(0.8,1)" font-size="14" text-anchor="middle" fill="#f0f0f0">0</text><text transform="translate(181.8,567.9) scale(0.8,1)" font-size="14" text-anchor="middle" fill="#f0f0f0">.</text><text transform="translate(188.6,567.9) scale(0.8,1)" font-size="14" text-anchor="middle" fill="#f0f0f0">0</text><text transform="translate(199.5,567.9) scale(0.8,1)" font-size="14" text-anchor="middle" fill="#f0f0f0">0</text><text transform="translate(210.2,567.9) scale(0.8,1)" font-size="14" text-anchor="middle" fill="#f0f0f0">0</text><text transform="translate(221.4,567.9) scale(0.8,1)" font-size="14" text-anchor="middle" fill="#f0f0f0">с</text><path d="M229.8 559.7 H239 L234.4 564.7 Z" fill="#f0f0f0"/></svg>
<div class="a" style="left:59.2px;top:551px;width:21.8px;height:22px;background:#dddee3;border-radius:4px"></div>
<div class="a" style="left:259.2px;top:524.7px;width:25.8px;height:25.8px;background:#dddee3;border-radius:4px"></div>
<div class="a" style="left:248px;top:553px;width:584px;height:1px;background:#e2e2e5;"></div>
<div class="a" style="left:430px;top:522px;width:1px;height:31.5px;background:#e2e2e5;"></div>
<div class="a" style="left:432.3px;top:522px;width:1px;height:31.5px;background:#e2e2e5;"></div>
<svg width="832" height="608"><rect x="3.90" y="544.20" width="2.20" height="2.20" rx="0.50" fill="#8a8fa6"/><rect x="3.90" y="549.20" width="2.20" height="2.20" rx="0.50" fill="#8a8fa6"/><rect x="3.90" y="554.20" width="2.20" height="2.20" rx="0.50" fill="#8a8fa6"/><rect x="8.70" y="544.20" width="2.20" height="2.20" rx="0.50" fill="#8a8fa6"/><rect x="8.70" y="549.20" width="2.20" height="2.20" rx="0.50" fill="#8a8fa6"/><rect x="8.70" y="554.20" width="2.20" height="2.20" rx="0.50" fill="#8a8fa6"/><rect x="250.10" y="530.10" width="2.20" height="2.20" rx="0.50" fill="#8a8fa6"/><rect x="250.10" y="534.95" width="2.20" height="2.20" rx="0.50" fill="#8a8fa6"/><rect x="250.10" y="539.80" width="2.20" height="2.20" rx="0.50" fill="#8a8fa6"/><rect x="254.90" y="530.10" width="2.20" height="2.20" rx="0.50" fill="#8a8fa6"/><rect x="254.90" y="534.95" width="2.20" height="2.20" rx="0.50" fill="#8a8fa6"/><rect x="254.90" y="539.80" width="2.20" height="2.20" rx="0.50" fill="#8a8fa6"/><path d="M265.3 530.8 L277.8 537 L265.3 543.6 Z" fill="#478a66" stroke="#478a66" stroke-width="1" stroke-linejoin="round"/><path d="M75.40 561.90 L75.39 562.14 L75.38 562.38 L75.35 562.62 L75.23 562.84 L74.80 562.99 L74.34 563.09 L73.89 563.16 L73.46 563.20 L73.32 563.32 L73.25 563.46 L73.18 563.61 L73.10 563.75 L73.02 563.89 L72.93 564.02 L72.84 564.15 L72.80 564.34 L72.98 564.72 L73.15 565.15 L73.29 565.60 L73.38 566.04 L73.25 566.26 L73.05 566.41 L72.86 566.54 L72.65 566.66 L72.44 566.78 L72.22 566.88 L72.00 566.98 L71.75 566.98 L71.41 566.69 L71.09 566.34 L70.80 565.98 L70.56 565.63 L70.38 565.57 L70.22 565.59 L70.06 565.60 L69.90 565.60 L69.74 565.60 L69.58 565.59 L69.42 565.57 L69.24 565.63 L69.00 565.98 L68.71 566.34 L68.39 566.69 L68.05 566.98 L67.80 566.98 L67.58 566.88 L67.36 566.78 L67.15 566.66 L66.94 566.54 L66.75 566.41 L66.55 566.26 L66.42 566.04 L66.51 565.60 L66.65 565.15 L66.82 564.72 L67.00 564.34 L66.96 564.15 L66.87 564.02 L66.78 563.89 L66.70 563.75 L66.62 563.61 L66.55 563.46 L66.48 563.32 L66.34 563.20 L65.91 563.16 L65.46 563.09 L65.00 562.99 L64.57 562.84 L64.45 562.62 L64.42 562.38 L64.41 562.14 L64.40 561.90 L64.41 561.66 L64.42 561.42 L64.45 561.18 L64.57 560.96 L65.00 560.81 L65.46 560.71 L65.91 560.64 L66.34 560.60 L66.48 560.48 L66.55 560.34 L66.62 560.19 L66.70 560.05 L66.78 559.91 L66.87 559.78 L66.96 559.65 L67.00 559.46 L66.82 559.08 L66.65 558.65 L66.51 558.20 L66.42 557.76 L66.55 557.54 L66.75 557.39 L66.94 557.26 L67.15 557.14 L67.36 557.02 L67.58 556.92 L67.80 556.82 L68.05 556.82 L68.39 557.11 L68.71 557.46 L69.00 557.82 L69.24 558.17 L69.42 558.23 L69.58 558.21 L69.74 558.20 L69.90 558.20 L70.06 558.20 L70.22 558.21 L70.38 558.23 L70.56 558.17 L70.80 557.82 L71.09 557.46 L71.41 557.11 L71.75 556.82 L72.00 556.82 L72.22 556.92 L72.44 557.02 L72.65 557.14 L72.86 557.26 L73.05 557.39 L73.25 557.54 L73.38 557.76 L73.29 558.20 L73.15 558.65 L72.98 559.08 L72.80 559.46 L72.84 559.65 L72.93 559.78 L73.02 559.91 L73.10 560.05 L73.18 560.19 L73.25 560.34 L73.32 560.48 L73.46 560.60 L73.89 560.64 L74.34 560.71 L74.80 560.81 L75.23 560.96 L75.35 561.18 L75.38 561.42 L75.39 561.66 Z" fill="none" stroke="#333" stroke-width="1.05" stroke-linejoin="round"/><circle cx="69.9" cy="561.9" r="1.5" fill="none" stroke="#333" stroke-width="1"/><rect x="290" y="540.8" width="134" height="1.4" fill="#c5d0dc"/><rect x="291.0" y="537.5" width="1" height="3" fill="#c5d0dc"/><rect x="300.6" y="537.5" width="1" height="3" fill="#c5d0dc"/><rect x="310.2" y="537.5" width="1" height="3" fill="#c5d0dc"/><rect x="319.8" y="537.5" width="1" height="3" fill="#c5d0dc"/><rect x="329.4" y="537.5" width="1" height="3" fill="#c5d0dc"/><rect x="339.0" y="537.5" width="1" height="3" fill="#c5d0dc"/><rect x="348.6" y="537.5" width="1" height="3" fill="#c5d0dc"/><rect x="358.2" y="537.5" width="1" height="3" fill="#c5d0dc"/><rect x="367.8" y="537.5" width="1" height="3" fill="#c5d0dc"/><rect x="377.4" y="537.5" width="1" height="3" fill="#c5d0dc"/><rect x="387.0" y="537.5" width="1" height="3" fill="#c5d0dc"/><rect x="396.6" y="537.5" width="1" height="3" fill="#c5d0dc"/><rect x="406.2" y="537.5" width="1" height="3" fill="#c5d0dc"/><rect x="415.8" y="537.5" width="1" height="3" fill="#c5d0dc"/><rect x="290.5" y="530.5" width="5" height="1.2" fill="#222"/><path d="M415.9 531.2 H420.9 M418.4 528.7 V533.7" stroke="#222" stroke-width="1.2"/><circle cx="334.2" cy="541.5" r="5.4" fill="#fafafa" stroke="#333" stroke-width="1.3"/></svg>
<div class="a" style="left:0px;top:584px;width:832px;height:2px;background:#dcdcdc;"></div>
<div class="a" style="left:0px;top:586px;width:832px;height:22px;background:#f0f0f0;"></div>
<div class="a" style="left:10px;top:587px;width:1px;height:19px;background:#d8d8d8;"></div>
<div class="a" style="left:657.5px;top:587px;width:1px;height:19px;background:#d8d8d8;"></div>
<div class="a" style="left:292px;top:587px;width:1px;height:19px;background:#d8d8d8;"></div>
<div class="t" style="left:15px;top:590.6px;font-size:11.7px;color:#1a1a1a;font-weight:normal;transform:scaleX(0.975);transform-origin:0 0">Остановлено</div>
<svg width="832" height="608"><rect x="819.12" y="602.62" width="1.76" height="1.76" rx="0.40" fill="#aaa"/><rect x="822.62" y="602.62" width="1.76" height="1.76" rx="0.40" fill="#aaa"/><rect x="826.12" y="602.62" width="1.76" height="1.76" rx="0.40" fill="#aaa"/><rect x="822.62" y="599.12" width="1.76" height="1.76" rx="0.40" fill="#aaa"/><rect x="826.12" y="599.12" width="1.76" height="1.76" rx="0.40" fill="#aaa"/><rect x="826.12" y="595.62" width="1.76" height="1.76" rx="0.40" fill="#aaa"/></svg>
</div></div>
</body></html>
